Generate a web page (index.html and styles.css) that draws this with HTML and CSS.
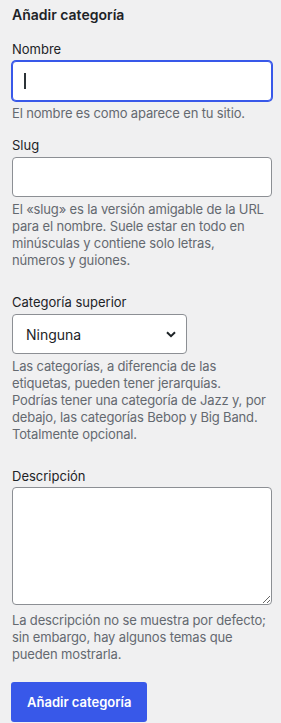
FILE: index.html
```html
<!DOCTYPE html>
<html lang="es">
  <head>
    <meta charset="UTF-8" />
    <title>Añadir categoría</title>
    <link rel="stylesheet" href="styles.css">
  </head>
  <body>
    <div class="add-term">
      <h2>Añadir categoría</h2>
      <form id="addtag">
        <div class="form-field field-name">
          <label for="tag-name">Nombre</label>
          <div class="input-wrap">
            <input type="text" id="tag-name" class="is-focused" />
            <span class="caret"></span>
          </div>
          <p class="hint">El nombre es como aparece en tu sitio.</p>
        </div>

        <div class="form-field">
          <label for="tag-slug">Slug</label>
          <input type="text" id="tag-slug" />
          <p class="hint">El «slug» es la versión amigable de la URL para el nombre. Suele estar en todo en minúsculas y contiene solo letras, números y guiones.</p>
        </div>

        <div class="form-field">
          <label for="parent">Categoría superior</label>
          <div class="select">
            <span>Ninguna</span>
            <svg width="10" height="7" viewBox="0 0 10 7">
              <path d="M1 1.2 L5 5.2 L9 1.2" fill="none" stroke="#1d2327" stroke-width="2" />
            </svg>
          </div>
          <p class="hint">Las categorías, a diferencia de las etiquetas, pueden tener jerarquías. Podrías tener una categoría de Jazz y, por debajo, las categorías Bebop y Big Band. Totalmente opcional.</p>
        </div>

        <div class="form-field field-desc">
          <label for="tag-description">Descripción</label>
          <textarea id="tag-description"></textarea>
          <p class="hint">La descripción no se muestra por defecto; sin embargo, hay algunos temas que pueden mostrarla.</p>
        </div>

        <button type="button" class="button-primary">Añadir categoría</button>
      </form>
    </div>
  </body>
</html>
```

FILE: styles.css
```css
body {
  margin: 0;
  background: #f0f0f1;
  color: #1d2327;
  font-family: Inter, "Noto Sans", sans-serif;
  font-size: 13px;
}
.add-term {
  padding: 6px 10px 0 11px;
}
h2 {
  margin: 0 0 17px 1px;
  font-size: 14px;
  line-height: 18px;
  font-weight: 600;
}
.form-field {
  margin-bottom: 25px;
}
.field-name {
  margin-bottom: 15px;
}
label {
  display: block;
  line-height: 17px;
  margin: 0 0 3px 1px;
}
input,
textarea {
  display: block;
  box-sizing: border-box;
  width: 260px;
  height: 40px;
  margin: 0 0 0 1px;
  background: #fff;
  border: 1px solid #8c8f94;
  border-radius: 4px;
  font: inherit;
}
.input-wrap {
  position: relative;
}
input.is-focused {
  border-color: #3858e9;
  box-shadow: 0 0 0 1px #3858e9;
  outline: none;
}
.caret {
  position: absolute;
  left: 13px;
  top: 12px;
  width: 1.5px;
  height: 16px;
  background: #2c3338;
}
textarea {
  height: 118px;
  resize: vertical;
}
.field-desc {
  margin-bottom: 19px;
}
.field-desc label {
  margin-bottom: 2px;
}
.field-desc .hint {
  margin-top: 7px;
}
.select {
  box-sizing: border-box;
  width: 175px;
  height: 40px;
  margin-left: 1px;
  padding: 0 10px 0 13px;
  display: flex;
  align-items: center;
  justify-content: space-between;
  background: #fff;
  border: 1px solid #8c8f94;
  border-radius: 4px;
  font-size: 14px;
}
.hint {
  max-width: 255px;
  margin: 4px 0 0 1px;
  color: #646970;
  line-height: 17px;
  letter-spacing: -0.15px;
}
.button-primary {
  display: block;
  margin-left: 0;
  height: 40px;
  padding: 0 16px;
  background: #3858e9;
  color: #fff;
  border: none;
  border-radius: 3px;
  font-family: inherit;
  font-size: 13px;
  font-weight: 600;
}
```
